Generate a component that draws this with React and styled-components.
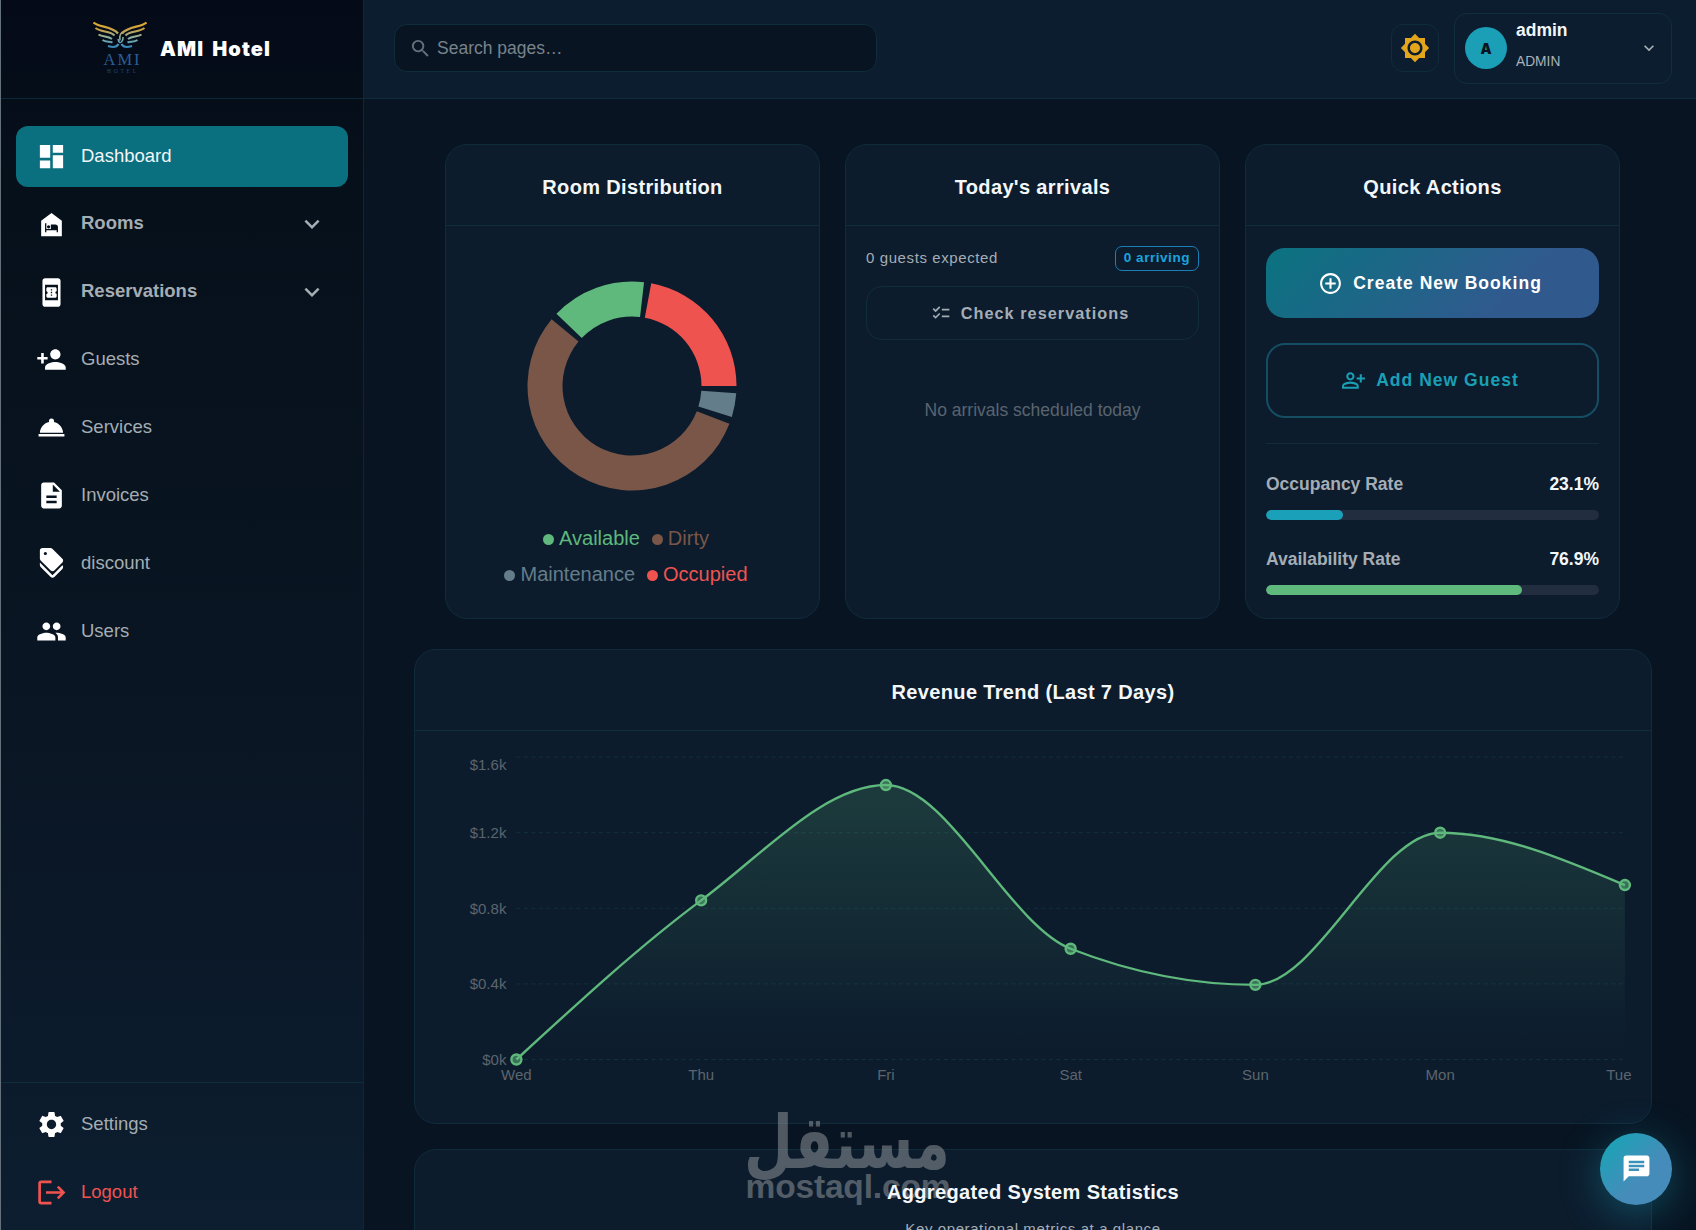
import React from "react";
import styled, { createGlobalStyle } from "styled-components";
import {
  MdAddCircleOutline,
  MdBookOnline,
  MdBrightness7,
  MdChat,
  MdChecklist,
  MdDashboard,
  MdDescription,
  MdDiscount,
  MdExpandMore,
  MdNightShelter,
  MdOutlinePersonAddAlt,
  MdPeople,
  MdPersonAdd,
  MdRoomService,
  MdSearch,
  MdSettings,
} from "react-icons/md";

const LogoutIcon = () => (
  <svg width="31" height="31" viewBox="0 0 31 31" fill="none" stroke="#ef5350">
    <path d="M15.5 4.9H5.2Q3.6 4.9 3.6 6.5V24.6Q3.6 26.2 5.2 26.2H15.5" strokeWidth="2.7" />
    <path d="M10 15.5H28M21.8 9.6L27.6 15.5L21.8 21.4" strokeWidth="2.6" />
  </svg>
);

const NAV = [
  { label: "Dashboard", icon: MdDashboard, active: true },
  { label: "Rooms", icon: MdNightShelter, group: true },
  { label: "Reservations", icon: MdBookOnline, group: true },
  { label: "Guests", icon: MdPersonAdd },
  { label: "Services", icon: MdRoomService },
  { label: "Invoices", icon: MdDescription },
  { label: "discount", icon: MdDiscount },
  { label: "Users", icon: MdPeople },
];

const ROOMS = [
  { name: "Occupied", value: 6, color: "#ef5350" },
  { name: "Available", value: 4, color: "#5fb87c" },
  { name: "Dirty", value: 15, color: "#795648" },
  { name: "Maintenance", value: 1, color: "#647d8a" },
];

const LEGEND = ["Available", "Dirty", "Maintenance", "Occupied"];

const REVENUE = [
  { day: "Wed", value: 0 },
  { day: "Thu", value: 0.842 },
  { day: "Fri", value: 1.452 },
  { day: "Sat", value: 0.586 },
  { day: "Sun", value: 0.395 },
  { day: "Mon", value: 1.2 },
  { day: "Tue", value: 0.923 },
];

const Logo = () => {
  const wing = (
    <>
      <path d="M.5 1.5C6 6.5 19 5 25 12.5" strokeWidth="2.3" />
      <path d="M2.5 7C8 11.5 17 9.5 21.5 14.5" strokeWidth="2.1" />
      <path d="M5.5 13.5C10 16.5 14.5 14.5 19 18" strokeWidth="2" />
      <path d="M9.5 19C13 21.5 16 20 19.5 21.5" strokeWidth="2" />
      <path d="M15 25C21 27 24 26 25.5 23" strokeWidth="2" />
    </>
  );
  return (
    <svg width="54" height="53" viewBox="0 0 54 53" fill="none">
      <defs>
        <linearGradient id="wing" gradientUnits="userSpaceOnUse" x1="0" y1="0" x2="0" y2="27">
          <stop offset="0" stopColor="#f0ad24" />
          <stop offset="0.35" stopColor="#c3a04c" />
          <stop offset="0.6" stopColor="#8fb4a0" />
          <stop offset="1" stopColor="#2f83bf" />
        </linearGradient>
      </defs>
      <g stroke="url(#wing)">
        {wing}
        <g transform="translate(54 0) scale(-1 1)">{wing}</g>
        <path d="M27 19.5C26 14 28 11.5 31 10.5M25 18Q26 23 28.5 21Q30.5 19 30 16" strokeWidth="1.5" />
      </g>
      <text x="28.5" y="43.5" textAnchor="middle" textLength="36" fontFamily="Liberation Serif, serif" fontSize="16.5" fill="#2a5c97">
        AMI
      </text>
      <text x="28.5" y="51.5" textAnchor="middle" textLength="29" fontFamily="Liberation Serif, serif" fontSize="5.5" fill="#1f4b78">
        HOTEL
      </text>
    </svg>
  );
};

const Donut = () => {
  const outer = 104.5;
  const inner = 69.5;
  const gap = 4;
  const total = ROOMS.reduce((sum, r) => sum + r.value, 0);
  const unit = (360 - gap * ROOMS.length) / total;
  const point = (r, deg) => {
    const a = (deg * Math.PI) / 180;
    return `${(105 + r * Math.cos(a)).toFixed(2)} ${(105 - r * Math.sin(a)).toFixed(2)}`;
  };
  let angle = 0;
  return (
    <svg width="210" height="210" viewBox="0 0 210 210">
      {ROOMS.map((room) => {
        const start = angle;
        const end = start + room.value * unit;
        angle = end + gap;
        const large = end - start > 180 ? 1 : 0;
        return (
          <path
            key={room.name}
            fill={room.color}
            d={`M${point(outer, start)}A${outer} ${outer} 0 ${large} 0 ${point(outer, end)}L${point(inner, end)}A${inner} ${inner} 0 ${large} 1 ${point(inner, start)}Z`}
          />
        );
      })}
    </svg>
  );
};

// monotone cubic interpolation, keeps the curve from overshooting the points
const monotonePath = (pts) => {
  const n = pts.length;
  const slope = (i) => (pts[i + 1].y - pts[i].y) / (pts[i + 1].x - pts[i].x);
  const t = pts.map((_, i) => {
    if (i === 0 || i === n - 1) return null;
    const a = slope(i - 1);
    const b = slope(i);
    if (a * b <= 0) return 0;
    return Math.sign(a) * Math.min(Math.abs(a), Math.abs(b), Math.abs(a + b) / 4) * 2;
  });
  t[0] = (3 * slope(0) - t[1]) / 2;
  t[n - 1] = (3 * slope(n - 2) - t[n - 2]) / 2;
  let d = `M${pts[0].x} ${pts[0].y}`;
  for (let i = 0; i < n - 1; i++) {
    const dx = (pts[i + 1].x - pts[i].x) / 3;
    d += `C${pts[i].x + dx} ${pts[i].y + dx * t[i]} ${pts[i + 1].x - dx} ${pts[i + 1].y - dx * t[i + 1]} ${pts[i + 1].x} ${pts[i + 1].y}`;
  }
  return d;
};

const RevenueChart = () => {
  const left = 101.4;
  const step = 184.75;
  const base = 328.5;
  const tick = 75.6;
  const pts = REVENUE.map((r, i) => ({
    x: left + i * step,
    y: base - (r.value / 0.4) * tick,
  }));
  const right = pts[pts.length - 1].x;
  const line = monotonePath(pts);
  return (
    <ChartSvg width="1236" height="392" viewBox="0 0 1236 392">
      <defs>
        <linearGradient id="area" x1="0" y1="0" x2="0" y2="1">
          <stop offset="0.05" stopColor="#5fb87c" stopOpacity="0.19" />
          <stop offset="0.95" stopColor="#5fb87c" stopOpacity="0" />
        </linearGradient>
      </defs>
      {["$0k", "$0.4k", "$0.8k", "$1.2k", "$1.6k"].map((label, i) => {
        const y = base - i * tick;
        return (
          <g key={label}>
            <line x1={left} x2={right} y1={y} y2={y} stroke="#11303f" strokeDasharray="4 3.5" />
            <text x={left - 10} y={y + (i === 4 ? 12.8 : 5.3)} textAnchor="end">
              {label}
            </text>
          </g>
        );
      })}
      <path d={`${line}L${right} ${base}L${left} ${base}Z`} fill="url(#area)" />
      <path d={line} fill="none" stroke="#5fb87c" strokeWidth="2.4" />
      {pts.map((p, i) => (
        <g key={REVENUE[i].day}>
          <circle cx={p.x} cy={p.y} r="5" fill="#5fb87c" fillOpacity="0.55" stroke="#5fb87c" strokeWidth="2.4" />
          <text x={i === 6 ? p.x - 6 : p.x} y="348.7" textAnchor="middle">
            {REVENUE[i].day}
          </text>
        </g>
      ))}
    </ChartSvg>
  );
};

const Rate = ({ label, value, color }) => (
  <RateBlock>
    <RateRow>
      <span>{label}</span>
      <strong>{value}%</strong>
    </RateRow>
    <Track>
      <Fill $color={color} style={{ width: `${value}%` }} />
    </Track>
  </RateBlock>
);

export default function App() {
  return (
    <>
      <GlobalStyle />
      <Page>
        <Sidebar>
          <Brand>
            <Logo />
            <BrandName>AMI Hotel</BrandName>
          </Brand>
          <Nav>
            {NAV.map(({ label, icon: Icon, active, group }) => (
              <NavItem key={label} $active={active} $bold={group}>
                <Icon size={31} color="#fff" />
                <span>{label}</span>
                {group && <MdExpandMore size={30} />}
              </NavItem>
            ))}
          </Nav>
          <SidebarFooter>
            <NavItem>
              <MdSettings size={31} color="#fff" />
              <span>Settings</span>
            </NavItem>
            <NavItem $danger>
              <LogoutIcon />
              <span>Logout</span>
            </NavItem>
          </SidebarFooter>
        </Sidebar>

        <Content>
          <Topbar>
            <Search>
              <MdSearch size={23} />
              <span>Search pages…</span>
            </Search>
            <TopActions>
              <ThemeButton>
                <MdBrightness7 size={30} />
              </ThemeButton>
              <Profile>
                <Avatar>A</Avatar>
                <ProfileText>
                  <ProfileName>admin</ProfileName>
                  <ProfileRole>ADMIN</ProfileRole>
                </ProfileText>
                <MdExpandMore size={20} />
              </Profile>
            </TopActions>
          </Topbar>

          <Main>
            <CardRow>
              <Card>
                <CardHeader>Room Distribution</CardHeader>
                <DonutBody>
                  <Donut />
                  <Legend>
                    {LEGEND.map((name) => (
                      <LegendItem key={name} $color={ROOMS.find((r) => r.name === name).color}>
                        {name}
                      </LegendItem>
                    ))}
                  </Legend>
                </DonutBody>
              </Card>

              <Card>
                <CardHeader>Today's arrivals</CardHeader>
                <ArrivalsBody>
                  <ArrivalsTop>
                    <span>0 guests expected</span>
                    <Badge>0 arriving</Badge>
                  </ArrivalsTop>
                  <CheckButton>
                    <MdChecklist size={20} />
                    Check reservations
                  </CheckButton>
                  <Empty>No arrivals scheduled today</Empty>
                </ArrivalsBody>
              </Card>

              <Card>
                <CardHeader>Quick Actions</CardHeader>
                <ActionsBody>
                  <PrimaryButton>
                    <MdAddCircleOutline size={25} />
                    Create New Booking
                  </PrimaryButton>
                  <OutlineButton>
                    <MdOutlinePersonAddAlt size={25} />
                    Add New Guest
                  </OutlineButton>
                  <Divider />
                  <Rates>
                    <Rate label="Occupancy Rate" value={23.1} color="#1aa0b8" />
                    <Rate label="Availability Rate" value={76.9} color="#5fb87c" />
                  </Rates>
                </ActionsBody>
              </Card>
            </CardRow>

            <WideCard>
              <CardHeader>Revenue Trend (Last 7 Days)</CardHeader>
              <RevenueChart />
            </WideCard>

            <WideCard>
              <StatsHeader>
                <StatsTitle>Aggregated System Statistics</StatsTitle>
                <StatsText>Key operational metrics at a glance</StatsText>
              </StatsHeader>
            </WideCard>
          </Main>
        </Content>

        <Watermark>
          <svg width="206" height="98" viewBox="0 0 206 98">
            <text x="102" y="58" textAnchor="middle" textLength="206" lengthAdjust="spacingAndGlyphs" fontFamily="DejaVu Sans, sans-serif" fontWeight="700" fontSize="74">
              مستقل
            </text>
            <text x="0.5" y="87.5" textLength="205" fontFamily="Liberation Sans, sans-serif" fontWeight="700" fontSize="33.5">
              mostaql.com
            </text>
          </svg>
        </Watermark>
        <ChatButton>
          <MdChat size={31} />
        </ChatButton>
      </Page>
    </>
  );
}

const GlobalStyle = createGlobalStyle`
  * {
    box-sizing: border-box;
  }
  body {
    margin: 0;
    overflow: hidden;
    background: #081422;
    font-family: "Liberation Sans", Arial, sans-serif;
  }
  svg {
    flex-shrink: 0;
  }
`;

const Page = styled.div`
  position: relative;
  display: flex;
  height: 1230px;
  overflow: hidden;
  border-left: 1px solid #64707a;
`;

const Sidebar = styled.aside`
  display: flex;
  flex-direction: column;
  width: 363px;
  flex-shrink: 0;
  border-right: 1px solid #0f2636;
  background: linear-gradient(180deg, #040a17 0%, #06101b 15%, #081420 45%, #0b1828 75%, #0c1e30 100%);
`;

const Brand = styled.div`
  display: flex;
  align-items: center;
  gap: 13px;
  height: 99px;
  padding: 0 0 4px 92px;
  border-bottom: 1px solid #0d2838;
`;

const BrandName = styled.div`
  padding-top: 3px;
  font-family: Inter, sans-serif;
  font-weight: 900;
  font-size: 20px;
  letter-spacing: 1.1px;
  word-spacing: 3px;
  color: #fff;
`;

const Nav = styled.nav`
  display: flex;
  flex-direction: column;
  flex: 1;
  gap: 6.8px;
  padding: 27px 15px 0 15px;
`;

const NavItem = styled.div`
  display: flex;
  align-items: center;
  height: 61px;
  padding: 0 21px 0 20px;
  border-radius: 12px;
  font-size: 18.5px;
  line-height: 22px;
  font-weight: ${(p) => (p.$bold ? 700 : 400)};
  color: ${(p) => (p.$danger ? "#ef5350" : p.$active ? "#f2f6f8" : "#a4adb3")};
  background: ${(p) => (p.$active ? "#0a6f7e" : "transparent")};

  span {
    flex: 1;
    padding-bottom: ${(p) => (p.$bold ? 3 : 1)}px;
    margin-left: 14px;
  }
`;

const SidebarFooter = styled.div`
  display: flex;
  flex-direction: column;
  gap: 7px;
  height: 148px;
  padding: 11px 15px 0 15px;
  border-top: 1px solid #0f2d3c;
`;

const Content = styled.div`
  display: flex;
  flex-direction: column;
  flex: 1;
`;

const Topbar = styled.header`
  display: flex;
  align-items: center;
  justify-content: space-between;
  height: 99px;
  flex-shrink: 0;
  padding: 0 24px 2px 30px;
  background: #0c1d2f;
  border-bottom: 1px solid #0f2d3e;
`;

const Search = styled.div`
  display: flex;
  align-items: center;
  gap: 5px;
  width: 483px;
  height: 48px;
  padding-left: 14px;
  border: 1px solid #0f2c3a;
  border-radius: 13px;
  background: #081421;
  color: #65707a;
  font-size: 17.5px;

  span {
    color: #78838c;
  }
`;

const TopActions = styled.div`
  display: flex;
  align-items: center;
  gap: 15px;
`;

const ThemeButton = styled.div`
  display: flex;
  align-items: center;
  justify-content: center;
  width: 48px;
  height: 48px;
  border: 1px solid #0f2c3a;
  border-radius: 12px;
  color: #e3a51c;
`;

const Profile = styled.div`
  display: flex;
  align-items: center;
  width: 218px;
  height: 71px;
  padding: 0 12px 0 10px;
  border: 1px solid #112e3d;
  border-radius: 13px;
  color: #a9b2b9;
`;

const Avatar = styled.div`
  display: flex;
  align-items: center;
  justify-content: center;
  width: 42px;
  height: 42px;
  margin-right: 9px;
  border-radius: 50%;
  background: #1a9fb6;
  color: #081421;
  font-family: Inter, sans-serif;
  font-size: 14px;
  font-weight: 900;
`;

const ProfileText = styled.div`
  display: flex;
  flex-direction: column;
  gap: 12px;
  flex: 1;
  padding-bottom: 7px;
`;

const ProfileName = styled.div`
  font-size: 17.5px;
  line-height: 22px;
  font-weight: 700;
  color: #f2f6f8;
`;

const ProfileRole = styled.div`
  font-size: 13.75px;
  line-height: 18px;
`;

const Main = styled.main`
  display: flex;
  flex-direction: column;
  flex: 1;
  padding: 45px 44px 0 50px;
`;

const CardRow = styled.div`
  display: grid;
  grid-template-columns: repeat(3, 375px);
  grid-template-rows: 475px;
  gap: 25px;
  margin-bottom: 30px;
  padding-left: 31px;
`;

const Card = styled.section`
  display: flex;
  flex-direction: column;
  border: 1px solid #102b3a;
  border-radius: 22px;
  background: #0c1c2d;
`;

const WideCard = styled(Card)`
  height: 475px;
  flex-shrink: 0;
  margin-bottom: 25px;
`;

const CardHeader = styled.h2`
  height: 81px;
  flex-shrink: 0;
  margin: 0;
  padding: 30px 0 0;
  border-bottom: 1px solid #102d3b;
  text-align: center;
  font-size: 20px;
  line-height: 24px;
  letter-spacing: 0.35px;
  color: #f4f7fa;
`;

const DonutBody = styled.div`
  display: flex;
  flex-direction: column;
  align-items: center;
  padding: 55px 1px 0 0;
`;

const Legend = styled.div`
  display: flex;
  flex-wrap: wrap;
  justify-content: center;
  width: 300px;
  margin-top: 29px;
`;

const LegendItem = styled.div`
  display: flex;
  align-items: center;
  margin-right: 12px;
  font-size: 20px;
  line-height: 36px;
  color: ${(p) => p.$color};

  &::before {
    content: "";
    width: 11px;
    height: 11px;
    margin: 3px 5px 0 0;
    border-radius: 50%;
    background: ${(p) => p.$color};
  }
`;

const ArrivalsBody = styled.div`
  display: flex;
  flex-direction: column;
  padding: 20px 20px 0;
`;

const ArrivalsTop = styled.div`
  display: flex;
  align-items: center;
  justify-content: space-between;
  height: 25px;
  font-size: 15px;
  letter-spacing: 0.6px;
  color: #a4adb5;

  span {
    padding-bottom: 2px;
  }
`;

const Badge = styled.div`
  height: 25px;
  padding: 0 8px;
  border: 1px solid #1b7fb5;
  border-radius: 7px;
  font-size: 13.5px;
  line-height: 22px;
  font-weight: 700;
  letter-spacing: 0.55px;
  color: #1ba4de;
`;

const Button = styled.button`
  display: flex;
  align-items: center;
  justify-content: center;
  padding: 0 5px 0 0;
  border: none;
  background: none;
  font-family: inherit;
  font-weight: 700;
  letter-spacing: 1.03px;
`;

const CheckButton = styled(Button)`
  gap: 10px;
  height: 54px;
  margin-top: 15px;
  border: 1px solid #102d3a;
  border-radius: 16px;
  font-size: 16.25px;
  color: #a4adb5;
`;

const Empty = styled.p`
  margin: 60px 0 0;
  text-align: center;
  font-size: 17.5px;
  line-height: 20px;
  color: #59646e;
`;

const ActionsBody = styled.div`
  display: flex;
  flex-direction: column;
  padding: 22px 20px 0;
`;

const PrimaryButton = styled(Button)`
  gap: 10px;
  height: 70px;
  border-radius: 19px;
  background: linear-gradient(135deg, #0a7380 0%, #305a8e 72%, #305a8e 100%);
  font-size: 17.5px;
  color: #fff;
`;

const OutlineButton = styled(Button)`
  gap: 10px;
  height: 75px;
  margin-top: 25px;
  border: 2px solid #154e63;
  border-radius: 19px;
  font-size: 17.5px;
  color: #1a9fb5;
`;

const Divider = styled.div`
  height: 1px;
  margin: 25px 0 30px;
  background: #102d3a;
`;

const Rates = styled.div`
  display: flex;
  flex-direction: column;
  gap: 29px;
`;

const RateBlock = styled.div`
  display: flex;
  flex-direction: column;
`;

const RateRow = styled.div`
  display: flex;
  justify-content: space-between;
  height: 36px;
  font-size: 17.5px;
  line-height: 20px;
  font-weight: 700;
  color: #a4adb5;

  strong {
    color: #f4f7fa;
  }
`;

const Track = styled.div`
  height: 10px;
  border-radius: 5px;
  overflow: hidden;
  background: #222e3f;
`;

const Fill = styled.div`
  height: 100%;
  border-radius: 5px;
  background: ${(p) => p.$color};
`;

const ChartSvg = styled.svg`
  display: block;

  text {
    font-size: 15px;
    fill: #5c656e;
  }
`;

const StatsHeader = styled.div`
  position: relative;
  z-index: 2;
  padding-top: 30px;
  text-align: center;
`;

const StatsTitle = styled.h2`
  margin: 0;
  font-size: 20px;
  line-height: 24px;
  letter-spacing: 0.35px;
  color: #f4f7fa;
`;

const StatsText = styled.p`
  margin: 15px 0 0;
  font-size: 15px;
  line-height: 20px;
  letter-spacing: 0.6px;
  color: #a4adb5;
`;

const Watermark = styled.div`
  position: absolute;
  left: 744px;
  top: 1110px;
  z-index: 1;
  fill: #a9acae;
  opacity: 0.45;

  svg {
    overflow: visible;
  }
`;

const ChatButton = styled.div`
  position: absolute;
  right: 24px;
  bottom: 25px;
  z-index: 3;
  display: flex;
  align-items: center;
  justify-content: center;
  width: 72px;
  height: 72px;
  padding-bottom: 1px;
  border-radius: 50%;
  background: linear-gradient(135deg, #1aa3b6 10%, #468cba 60%);
  box-shadow: 0 8px 40px rgba(26, 160, 184, 0.4);
  color: #fff;
`;
